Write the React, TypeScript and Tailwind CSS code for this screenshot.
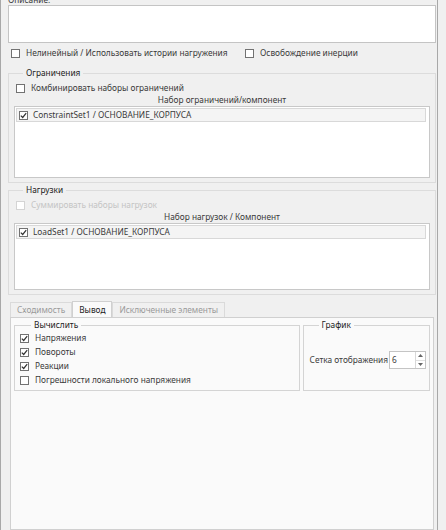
import React from "react";

const font = { fontFamily: '"Noto Sans", "Open Sans", sans-serif' };

function Check({ checked = false, disabled = false }: { checked?: boolean; disabled?: boolean }) {
  return (
    <span
      className={
        "inline-flex w-[9px] h-[9px] shrink-0 items-center justify-center border bg-white " +
        (disabled ? "border-[#d4d4d4]" : "border-[#727272]")
      }
    >
      {checked && (
        <svg width="7" height="7" viewBox="0 0 7 7">
          <path d="M0.8 3.6 L2.7 5.5 L6.2 1.2" fill="none" stroke="#333" strokeWidth="1.2" />
        </svg>
      )}
    </span>
  );
}

function CheckRow({ label, checked, disabled }: { label: string; checked?: boolean; disabled?: boolean }) {
  return (
    <div className="flex items-center gap-[6px] h-[14px] whitespace-nowrap">
      <Check checked={checked} disabled={disabled} />
      <span className={disabled ? "text-[#c4c4c4]" : "text-[#3a3a3a]"}>{label}</span>
    </div>
  );
}

function ListGroup({
  title,
  checkLabel,
  checkDisabled,
  header,
  item,
  listH,
}: {
  title: string;
  checkLabel: string;
  checkDisabled?: boolean;
  header: string;
  item: string;
  listH: string;
}) {
  return (
    <fieldset className="border border-[#dcdcdc] px-[5px] pb-[4px]">
      <legend className="ml-[9px] px-[3px] text-[#222] h-[10px] leading-[10px]">{title}</legend>
      <div className="pl-[2px] mt-[3px]">
        <CheckRow label={checkLabel} disabled={checkDisabled} />
      </div>
      <div className="text-center text-[#3a3a3a] h-[12px] leading-[12px] mt-[-1px]">{header}</div>
      <div className={listH + " border border-[#c8c8c8] bg-white pt-[1px] pl-[1px] pr-[3px]"}>
        <div className="flex items-center gap-[5px] h-[14px] border border-[#d8d8d8] bg-[#f4f4f4] pl-[2px]">
          <Check checked />
          <span className="text-[#3a3a3a]">{item}</span>
        </div>
      </div>
    </fieldset>
  );
}

export default function App() {
  return (
    <div
      className="w-[446px] h-[530px] overflow-hidden bg-[#f0f0f0] flex text-[8.3px] leading-[12px]"
      style={font}
    >
      <div className="w-[438px] h-full border-l border-r border-[#a8a8a8] flex flex-col pl-[7px] pr-[1px]">
        <div className="mt-[-6px] h-[11px] leading-[11px] text-[#3a3a3a]">Описание:</div>
        <div className="h-[38px] border border-[#c4c4c4] bg-white" />
        <div className="flex items-center h-[14px] mt-[3px] pl-[3px]">
          <div className="w-[234px]">
            <CheckRow label="Нелинейный / Использовать истории нагружения" />
          </div>
          <CheckRow label="Освобождение инерции" />
        </div>
        <div className="mt-[8px]">
          <ListGroup
            title="Ограничения"
            checkLabel="Комбинировать наборы ограничений"
            header="Набор ограничений/компонент"
            item="ConstraintSet1 / ОСНОВАНИЕ_КОРПУСА"
            listH="h-[72px]"
          />
        </div>
        <div className="mt-[2px]">
          <ListGroup
            title="Нагрузки"
            checkLabel="Суммировать наборы нагрузок"
            checkDisabled
            header="Набор нагрузок / Компонент"
            item="LoadSet1 / ОСНОВАНИЕ_КОРПУСА"
            listH="h-[67px]"
          />
        </div>
        <div className="mt-[6px] flex h-[16px] items-end pl-[2px]">
          <div className="h-[15px] px-[6px] flex items-center border border-b-0 border-[#dadada] text-[#9a9a9a]">Сходимость</div>
          <div className="h-[16px] px-[6px] flex items-center border border-b-0 border-[#d0d0d0] bg-[#fafafa] text-[#222]">Вывод</div>
          <div className="h-[15px] px-[6px] flex items-center border border-b-0 border-[#dadada] text-[#9a9a9a]">Исключенные элементы</div>
        </div>
        <div className="flex-1 ml-[2px] mr-[2px] border border-[#d0d0d0] bg-[#fafafa] px-[3px] pt-[2px]">
          <div className="flex gap-[3px]">
            <fieldset className="w-[290px] h-[71px] border border-[#d4d4d4] px-[5px]">
              <legend className="ml-[11px] px-[3px] text-[#222] h-[10px] leading-[10px]">Вычислить</legend>
              <div className="mt-[1px] flex flex-col">
                <CheckRow label="Напряжения" checked />
                <CheckRow label="Повороты" checked />
                <CheckRow label="Реакции" checked />
                <CheckRow label="Погрешности локального напряжения" />
              </div>
            </fieldset>
            <fieldset className="flex-1 h-[71px] border border-[#d4d4d4] pl-[6px] pr-[3px]">
              <legend className="ml-[9px] px-[3px] text-[#222] h-[10px] leading-[10px]">График</legend>
              <div className="mt-[21px] flex items-center whitespace-nowrap">
                <span className="text-[#3a3a3a]">Сетка отображения</span>
                <div className="ml-[1px] w-[37px] h-[18px] border border-[#c4c4c4] bg-white flex items-center">
                  <span className="flex-1 pl-[2px] text-[#3a3a3a]">6</span>
                  <div className="w-[10px] h-full border-l border-[#d8d8d8] flex flex-col">
                    <div className="flex-1 flex items-center justify-center border-b border-[#e0e0e0]">
                      <svg width="5" height="3" viewBox="0 0 5 3"><path d="M0 3 L2.5 0 L5 3Z" fill="#666" /></svg>
                    </div>
                    <div className="flex-1 flex items-center justify-center">
                      <svg width="5" height="3" viewBox="0 0 5 3"><path d="M0 0 L2.5 3 L5 0Z" fill="#666" /></svg>
                    </div>
                  </div>
                </div>
              </div>
            </fieldset>
          </div>
        </div>
      </div>
    </div>
  );
}
